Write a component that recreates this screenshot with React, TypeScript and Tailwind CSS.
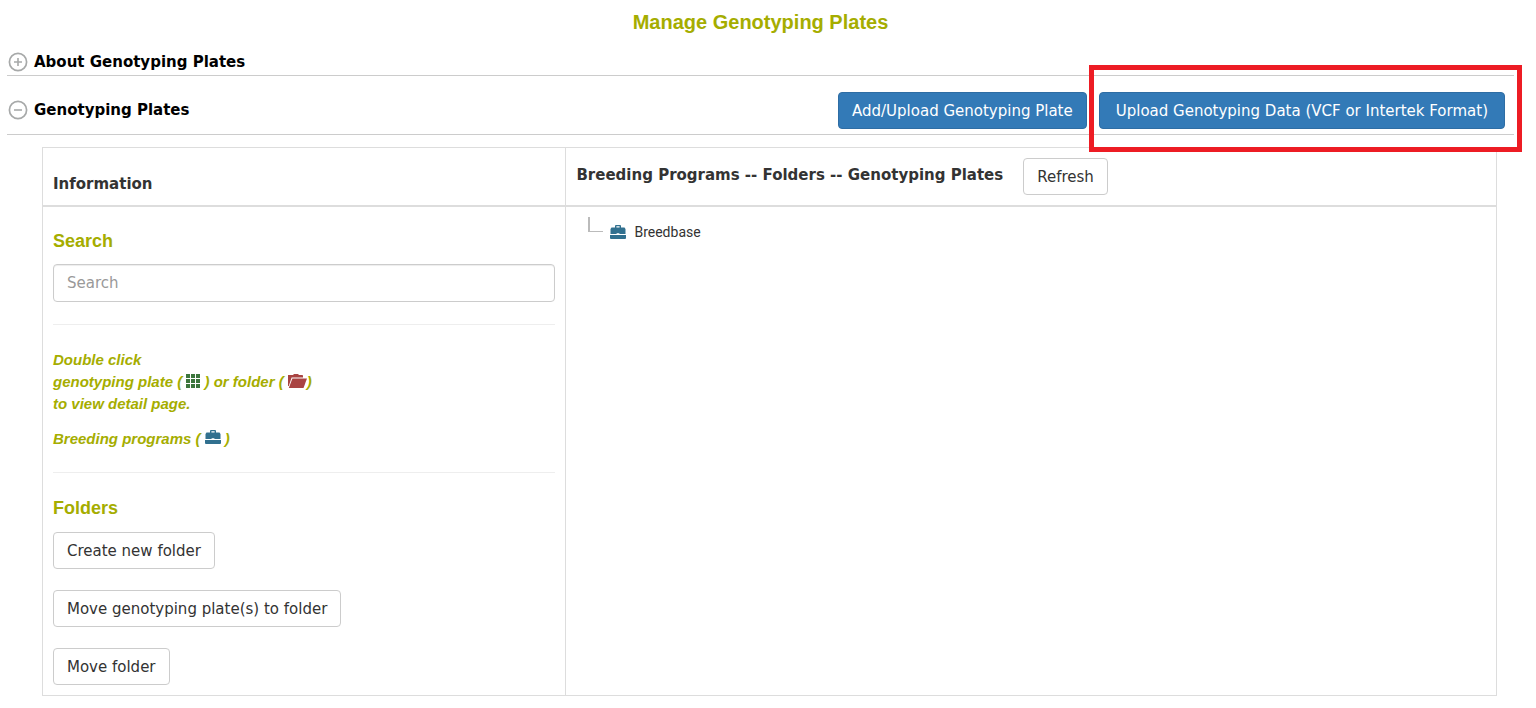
import type { ReactNode } from "react";

function CircleToggle({ open }: { open: boolean }) {
  return (
    <svg className="size-5 shrink-0" viewBox="0 0 20 20" fill="none" stroke="#a7a9a9" aria-hidden="true">
      <circle cx="10" cy="10" r="8.6" strokeWidth="1.7" />
      <path d={open ? "M6 10h8" : "M6 10h8M10 6v8"} strokeWidth="1.6" />
    </svg>
  );
}

function Briefcase() {
  return (
    <svg className="inline-block h-[14px] w-4 align-baseline" viewBox="0 0 16 14" fill="#31708f" aria-hidden="true">
      <path d="M5 3V1Q5 0 6 0h4Q11 0 11 1V3H9.6V1.2H6.4V3z" />
      <path d="M1.5 2.5h13L15.5 4V9H9.4V8.3H6.6V9H.5V4z" />
      <path d="M0 9.9h16V13q0 1-1 1H1q-1 0-1-1z" />
    </svg>
  );
}

function PlateGrid() {
  return (
    <svg className="inline-block size-[14px] align-[-1px]" viewBox="0 0 14 14" fill="#3c763d" aria-hidden="true">
      {[0, 5, 10].map((y) => [0, 5, 10].map((x) => <rect key={`${x}-${y}`} x={x} y={y} width="4" height="4" />))}
    </svg>
  );
}

function FolderOpen() {
  return (
    <svg className="inline-block h-[14px] w-[19px] align-[-1px]" viewBox="0 0 19 14" fill="#a94442" aria-hidden="true">
      <path d="M0 12V1h5l1-1h4l1 1h3.5l.5.8v1.7H3.6L.8 12z" />
      <path d="M4.4 4.4H19L15.5 14H.8z" />
    </svg>
  );
}

function Button({
  variant = "default",
  padding = "px-[13px]",
  children,
}: {
  variant?: "default" | "primary";
  padding?: string;
  children: ReactNode;
}) {
  const colours =
    variant === "primary" ? "border-[#2e6da4] bg-[#337ab7] text-white" : "border-[#cccccc] bg-white text-[#333333]";
  return (
    <button type="button" className={`h-[37px] rounded border whitespace-nowrap ${padding} ${colours}`}>
      {children}
    </button>
  );
}

export default function App() {
  return (
    <main className="bg-white pr-[22px] pl-[7px] font-['Verdana','DejaVu_Sans',sans-serif] text-[15px] leading-[22px] text-[#333333]">
      <h1 className="pt-[10px] text-center font-['Liberation_Sans',Arial,sans-serif] text-[20px] leading-6 font-bold text-[#a5ad00]">
        Manage Genotyping Plates
      </h1>

      <section className="mt-[14px] flex h-7 items-center border-b border-[#cccccc]">
        <button type="button" aria-expanded="false" className="flex items-center gap-1.5 pl-px font-bold text-black">
          <CircleToggle open={false} />
          About Genotyping Plates
        </button>
      </section>

      <section>
        <header className="flex items-center justify-between border-b border-[#cccccc] pt-4 pr-[9px] pb-[5px]">
          <button type="button" aria-expanded="true" className="flex items-center gap-1.5 pb-0.5 pl-px font-bold text-black">
            <CircleToggle open />
            Genotyping Plates
          </button>
          <div className="flex gap-3">
            <Button variant="primary">Add/Upload Genotyping Plate</Button>
            <div className="relative">
              <Button variant="primary" padding="px-4">
                Upload Genotyping Data (VCF or Intertek Format)
              </Button>
              <span className="pointer-events-none absolute -top-[27px] -right-[17px] -bottom-[23px] -left-[10px] border-[5px] border-[#ed1c24]" />
            </div>
          </div>
        </header>

        <div className="pt-3 pr-[17px] pb-3 pl-[35px]">
          <table className="w-full border-collapse border border-[#dddddd]">
            <thead>
              <tr className="border-b-2 border-[#dddddd]">
                <th className="w-[36%] border-r border-[#dddddd] px-[10px] pb-[10px] text-left align-bottom font-bold">
                  Information
                </th>
                <th className="p-[10px] text-left">
                  <div className="flex items-center gap-5">
                    <span className="pb-1 font-bold">Breeding Programs -- Folders -- Genotyping Plates</span>
                    <span className="font-normal">
                      <Button>Refresh</Button>
                    </span>
                  </div>
                </th>
              </tr>
            </thead>
            <tbody>
              <tr>
                <td className="border-r border-[#dddddd] px-[10px] pt-6 pb-[10px] align-top">
                  <h2 className="font-['Liberation_Sans',Arial,sans-serif] text-[18px] leading-5 font-bold text-[#a5ad00]">
                    <label htmlFor="tree-search">Search</label>
                  </h2>
                  <input
                    id="tree-search"
                    type="text"
                    placeholder="Search"
                    className="mt-[13px] block h-[38px] w-full rounded border border-[#cccccc] px-[13px] shadow-[inset_0_1px_1px_rgba(0,0,0,0.075)] placeholder:text-[#999999]"
                  />
                  <hr className="mt-[22px] border-[#eeeeee]" />
                  <div className="mt-6 flex flex-col gap-[13px] font-['Liberation_Sans',Arial,sans-serif] font-bold text-[#a5ad00] italic">
                    <p>
                      Double click
                      <br />
                      genotyping plate ( <PlateGrid /> ) or folder ( <FolderOpen />)
                      <br />
                      to view detail page.
                    </p>
                    <p>
                      Breeding programs ( <Briefcase /> )
                    </p>
                  </div>
                  <hr className="mt-[22px] border-[#eeeeee]" />
                  <h2 className="mt-[25px] font-['Liberation_Sans',Arial,sans-serif] text-[18px] leading-5 font-bold text-[#a5ad00]">
                    Folders
                  </h2>
                  <div className="mt-[14px] flex flex-col items-start gap-[21px]">
                    <Button>Create new folder</Button>
                    <Button>Move genotyping plate(s) to folder</Button>
                    <Button>Move folder</Button>
                  </div>
                </td>
                <td className="p-[10px] align-top">
                  <ul>
                    <li className="flex items-center pl-3">
                      <span className="h-[15px] w-[15px] self-start border-b border-l-2 border-[#bbbbbb]" />
                      <a href="#breedbase" className="flex items-center gap-2 pt-1 pl-[7px] font-['Roboto',sans-serif] text-[14px]">
                        <Briefcase />
                        Breedbase
                      </a>
                    </li>
                  </ul>
                </td>
              </tr>
            </tbody>
          </table>
        </div>
      </section>
    </main>
  );
}
